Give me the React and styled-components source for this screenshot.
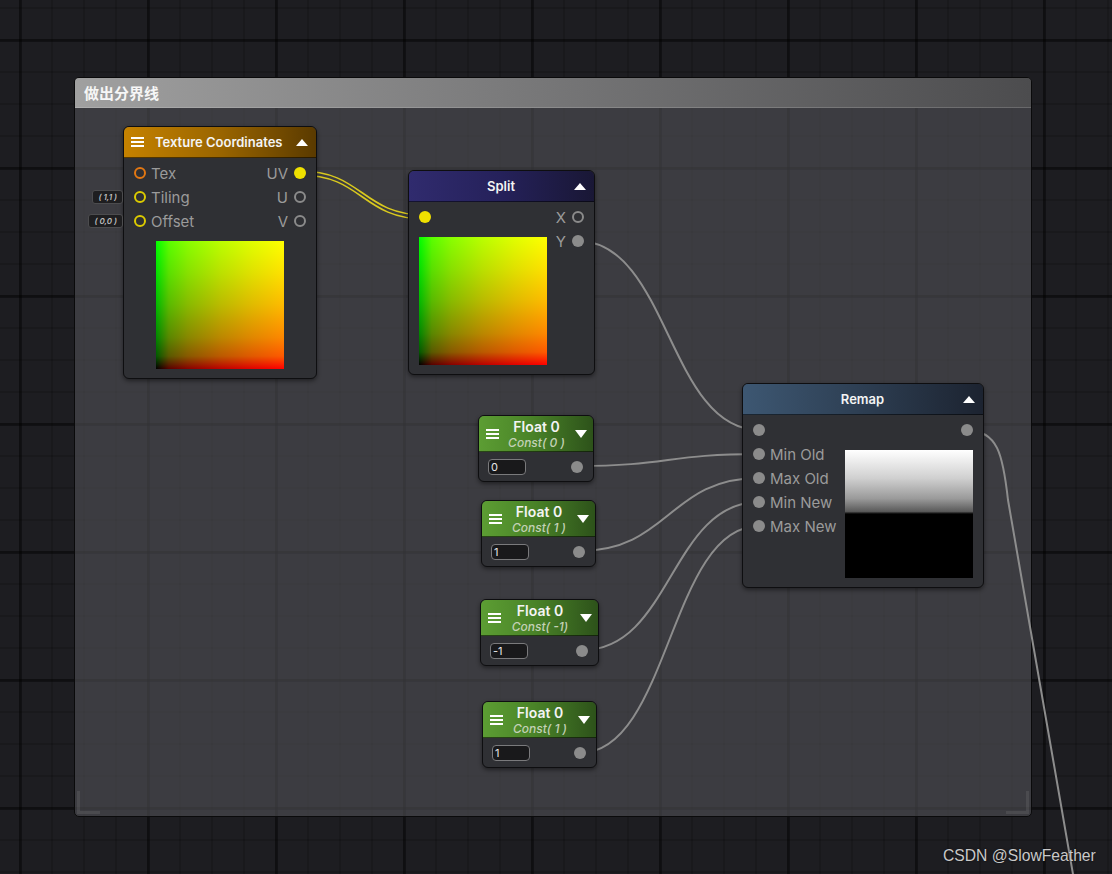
import React from 'react'
import styled, { createGlobalStyle, css } from 'styled-components'

const GlobalStyle = createGlobalStyle`
  html, body {
    margin: 0;
    padding: 0;
    background: #1c1c20;
  }
  body {
    font-family: Inter, 'Noto Sans', sans-serif;
  }
`

// colours
const GREY_PORT = '#8b8b8b'
const YELLOW = '#efe000'
const YELLOW_RING = '#dccb00'
const ORANGE = '#e27712'

// gamma-ish ramp, the shader preview is shown in sRGB
const ramp = (dir, c) => `linear-gradient(${dir},
  rgb(${c(0)}) 0%, rgb(${c(89)}) 10%, rgb(${c(136)}) 25%,
  rgb(${c(186)}) 50%, rgb(${c(224)}) 75%, rgb(${c(255)}) 100%)`

const Canvas = styled.div`
  position: relative;
  width: 1112px;
  height: 874px;
  overflow: hidden;
  background-color: #1d1d21;
  background-image:
    linear-gradient(to right, rgba(0, 0, 0, 0.4) 3px, transparent 3px),
    linear-gradient(to bottom, rgba(0, 0, 0, 0.4) 3px, transparent 3px),
    linear-gradient(to right, rgba(0, 0, 0, 0.14) 2px, transparent 2px),
    linear-gradient(to bottom, rgba(0, 0, 0, 0.14) 2px, transparent 2px);
  background-size: 128px 100%, 100% 128px, 32px 100%, 100% 32px;
  background-position: 19px 0, 0 39px, 19px 0, 0 7px;
`

const Group = styled.section`
  position: absolute;
  left: 74px;
  top: 77px;
  width: 958px;
  height: 740px;
  box-sizing: border-box;
  border: 1px solid #0a0a0b;
  border-radius: 5px;
  background: rgba(82, 82, 86, 0.6);
  display: flex;
  flex-direction: column;
`

const GroupHeader = styled.header`
  height: 30px;
  box-sizing: border-box;
  border-radius: 4px 4px 0 0;
  border-bottom: 1px solid rgba(255, 255, 255, 0.16);
  background: linear-gradient(90deg, #a0a0a0 0%, #7a7a7b 45%, #4c4c4e 100%);
  display: flex;
  align-items: center;
  padding-left: 9px;
  color: #f6f6f6;
  font: 700 15px 'Noto Sans CJK SC', 'Noto Sans', sans-serif;
`

const GroupBody = styled.div`
  flex: 1;
  position: relative;

  &::before,
  &::after {
    content: '';
    position: absolute;
    bottom: 2px;
    width: 20px;
    height: 20px;
    border-bottom: 3px solid rgba(255, 255, 255, 0.08);
  }
  &::before {
    left: 2px;
    border-left: 3px solid rgba(255, 255, 255, 0.08);
  }
  &::after {
    right: 2px;
    border-right: 3px solid rgba(255, 255, 255, 0.08);
  }
`

const WireLayer = styled.svg`
  position: absolute;
  left: 0;
  top: 0;
  pointer-events: none;
`

const Node = styled.div`
  position: absolute;
  left: ${p => p.$x}px;
  top: ${p => p.$y}px;
  width: ${p => p.$w}px;
  box-sizing: border-box;
  background: #2f3034;
  border: 1px solid #0e0e10;
  border-radius: 6px;
  box-shadow: 0 2px 4px rgba(0, 0, 0, 0.45);
`

const NodeHeader = styled.div`
  height: ${p => p.$h || 31}px;
  box-sizing: border-box;
  border-radius: 5px 5px 0 0;
  background: ${p => p.$bg};
  border-bottom: 1px solid rgba(0, 0, 0, 0.55);
  color: #f4f4f4;
  padding: 0 ${p => p.$pr || 8}px 0 7px;
  ${p => p.$centered
    ? css`
      display: grid;
      grid-template-columns: 1fr auto 1fr;
      align-items: center;
    `
    : css`
      display: flex;
      align-items: center;
    `}
`

const Title = styled.span`
  font: 600 ${p => p.$size || 13}px Inter, 'Noto Sans', sans-serif;
  white-space: nowrap;
  ${p => p.$left && css`
    flex: 1;
    margin-left: 11px;
  `}
`

const TitleStack = styled.div`
  display: flex;
  flex-direction: column;
  align-items: center;
  line-height: 14px;
  padding-top: 1px;
`

const SubTitle = styled.span`
  font: italic 500 12px Inter, 'Noto Sans', sans-serif;
  color: #c3d1b6;
  white-space: nowrap;
`

const Hamburger = styled.span`
  justify-self: start;
  width: 13px;
  height: 2px;
  background: #fff;
  box-shadow: 0 -4px 0 #fff, 0 4px 0 #fff;
  flex: none;
`

const Tri = styled.span`
  justify-self: end;
  width: 0;
  height: 0;
  border-left: 6px solid transparent;
  border-right: 6px solid transparent;
  ${p => p.$down
    ? css`border-top: 8px solid #fff;`
    : css`border-bottom: 7px solid #fff;`}
`

const Body = styled.div`
  display: flex;
  justify-content: space-between;
  padding: 3px 10px 9px;
`

const StackBody = styled(Body)`
  flex-direction: column;
`

const PortColumns = styled.div`
  display: flex;
  justify-content: space-between;
`

const Column = styled.div`
  display: flex;
  flex-direction: column;
  align-items: ${p => (p.$end ? 'flex-end' : 'flex-start')};
`

const PortRow = styled.div`
  position: relative;
  height: 24px;
  display: flex;
  align-items: center;
  gap: ${p => (p.$right ? 6 : 5)}px;
  color: #9b9b9b;
  font: 400 15px Inter, 'Noto Sans', sans-serif;
`

const Port = styled.span`
  width: 12px;
  height: 12px;
  border-radius: 50%;
  box-sizing: border-box;
  flex: none;
  ${p => p.$filled
    ? css`background: ${p.$color};`
    : css`border: 2px solid ${p.$color};`}
`

const DefaultPill = styled.span`
  position: absolute;
  right: calc(100% + 11px);
  top: 5px;
  height: 14px;
  box-sizing: border-box;
  padding: 0 5px;
  display: flex;
  align-items: center;
  background: #1e1e20;
  border: 1px solid #4c4c4e;
  border-radius: 3px;
  color: #bdbdbd;
  font: italic 600 8px Inter, sans-serif;
  white-space: nowrap;
`

const Preview = styled.div`
  width: 128px;
  height: 128px;
  margin-top: 8px;
  align-self: ${p => p.$align || 'auto'};
  ${p => p.$kind === 'uv'
    ? css`
      background-image:
        ${ramp('to right', v => `${v},0,0`)},
        ${ramp('to top', v => `0,${v},0`)};
      background-blend-mode: screen;
    `
    : css`
      background: linear-gradient(
        to bottom,
        #ffffff 0%,
        #d0d0d0 22%,
        #9a9a9a 38%,
        #5a5a5a 48%,
        #000 50%,
        #000 100%
      );
    `}
`

const FloatBody = styled.div`
  height: 29px;
  display: flex;
  align-items: center;
  justify-content: space-between;
  padding: 0 10px 0 9px;
`

const ValueBox = styled.span`
  width: 38px;
  height: 16px;
  box-sizing: border-box;
  background: #19191b;
  border: 1px solid #7a7a7c;
  border-radius: 4px;
  color: #e6e6e6;
  font: 400 11px Inter, sans-serif;
  line-height: 14px;
  padding-left: 2px;
`

const Watermark = styled.span`
  position: absolute;
  left: 943px;
  top: 847px;
  color: #c9c9c9;
  font: 400 15.7px 'Liberation Sans', Arial, sans-serif;
  text-shadow: 0 0 2px rgba(0, 0, 0, 0.6);
`

const wire = (x1, y1, x2, y2) => {
  const d = Math.max(Math.abs(x2 - x1) * 0.5, 30)
  return `M${x1} ${y1} C${x1 + d} ${y1} ${x2 - d} ${y2} ${x2} ${y2}`
}

const greyWires = [
  [578, 241, 759, 430],
  [577, 466, 759, 454],
  [579, 551, 759, 478],
  [583, 650, 759, 502],
  [580, 753, 759, 526],
]

const floats = [
  { x: 478, y: 415, w: 116, value: '0', sub: 'Const( 0 )' },
  { x: 481, y: 500, w: 115, value: '1', sub: 'Const( 1 )' },
  { x: 480, y: 599, w: 119, value: '-1', sub: 'Const( -1)' },
  { x: 482, y: 701, w: 115, value: '1', sub: 'Const( 1 )' },
]

const Wires = () => (
  <WireLayer width="1112" height="874" viewBox="0 0 1112 874">
    <g fill="none" stroke="#8d8d8d" strokeWidth="2" strokeLinecap="round">
      {greyWires.map((w, i) => (
        <path key={i} d={wire(...w)} />
      ))}
      <path d="M966 430 C998 430 1003 455 1008 500 L1074 880" />
    </g>
    <g fill="none" stroke="#d9c91e" strokeWidth="1.6">
      <path d={wire(300, 171, 425, 215)} />
      <path d={wire(300, 175, 425, 219)} />
    </g>
  </WireLayer>
)

const TextureCoordinates = () => (
  <Node $x={123} $y={126} $w={194}>
    <NodeHeader $bg="linear-gradient(90deg, #c58200 0%, #9a6500 50%, #5a3a00 100%)">
      <Hamburger />
      <Title $left>Texture Coordinates</Title>
      <Tri />
    </NodeHeader>
    <StackBody>
      <PortColumns>
        <Column>
          <PortRow><Port $color={ORANGE} />Tex</PortRow>
          <PortRow><DefaultPill>( 1,1 )</DefaultPill><Port $color={YELLOW_RING} />Tiling</PortRow>
          <PortRow><DefaultPill>( 0,0 )</DefaultPill><Port $color={YELLOW_RING} />Offset</PortRow>
        </Column>
        <Column $end>
          <PortRow $right>UV<Port $filled $color={YELLOW} /></PortRow>
          <PortRow $right>U<Port $color={GREY_PORT} /></PortRow>
          <PortRow $right>V<Port $color={GREY_PORT} /></PortRow>
        </Column>
      </PortColumns>
      <Preview $kind="uv" $align="center" />
    </StackBody>
  </Node>
)

const Split = () => (
  <Node $x={408} $y={170} $w={187}>
    <NodeHeader $centered $bg="linear-gradient(90deg, #302b6e 0%, #25215a 50%, #191735 100%)">
      <span />
      <Title>Split</Title>
      <Tri />
    </NodeHeader>
    <Body>
      <Column>
        <PortRow><Port $filled $color={YELLOW} /></PortRow>
        <Preview $kind="uv" />
      </Column>
      <Column $end>
        <PortRow $right>X<Port $color={GREY_PORT} /></PortRow>
        <PortRow $right>Y<Port $filled $color={GREY_PORT} /></PortRow>
      </Column>
    </Body>
  </Node>
)

const Remap = () => (
  <Node $x={742} $y={383} $w={242}>
    <NodeHeader $centered $bg="linear-gradient(90deg, #3d5772 0%, #2d3e52 50%, #1c2330 100%)">
      <span />
      <Title>Remap</Title>
      <Tri />
    </NodeHeader>
    <Body>
      <Column>
        <PortRow><Port $filled $color={GREY_PORT} /></PortRow>
        {['Min Old', 'Max Old', 'Min New', 'Max New'].map(l => (
          <PortRow key={l}><Port $filled $color={GREY_PORT} />{l}</PortRow>
        ))}
      </Column>
      <Column $end>
        <PortRow $right><Port $filled $color={GREY_PORT} /></PortRow>
        <Preview $kind="remap" />
      </Column>
    </Body>
  </Node>
)

const FloatNode = ({ x, y, w, value, sub }) => (
  <Node $x={x} $y={y} $w={w}>
    <NodeHeader $centered $h={36} $pr={6} $bg="linear-gradient(90deg, #5c9d33 0%, #4a8428 45%, #2d521a 100%)">
      <Hamburger />
      <TitleStack>
        <Title $size={14}>Float 0</Title>
        <SubTitle>{sub}</SubTitle>
      </TitleStack>
      <Tri $down />
    </NodeHeader>
    <FloatBody>
      <ValueBox>{value}</ValueBox>
      <Port $filled $color={GREY_PORT} />
    </FloatBody>
  </Node>
)

export default function App() {
  return (
    <>
      <GlobalStyle />
      <Canvas>
        <Group>
          <GroupHeader>做出分界线</GroupHeader>
          <GroupBody />
        </Group>
        <Wires />
        <TextureCoordinates />
        <Split />
        <Remap />
        {floats.map((f, i) => (
          <FloatNode key={i} {...f} />
        ))}
        <Watermark>CSDN @SlowFeather</Watermark>
      </Canvas>
    </>
  )
}
